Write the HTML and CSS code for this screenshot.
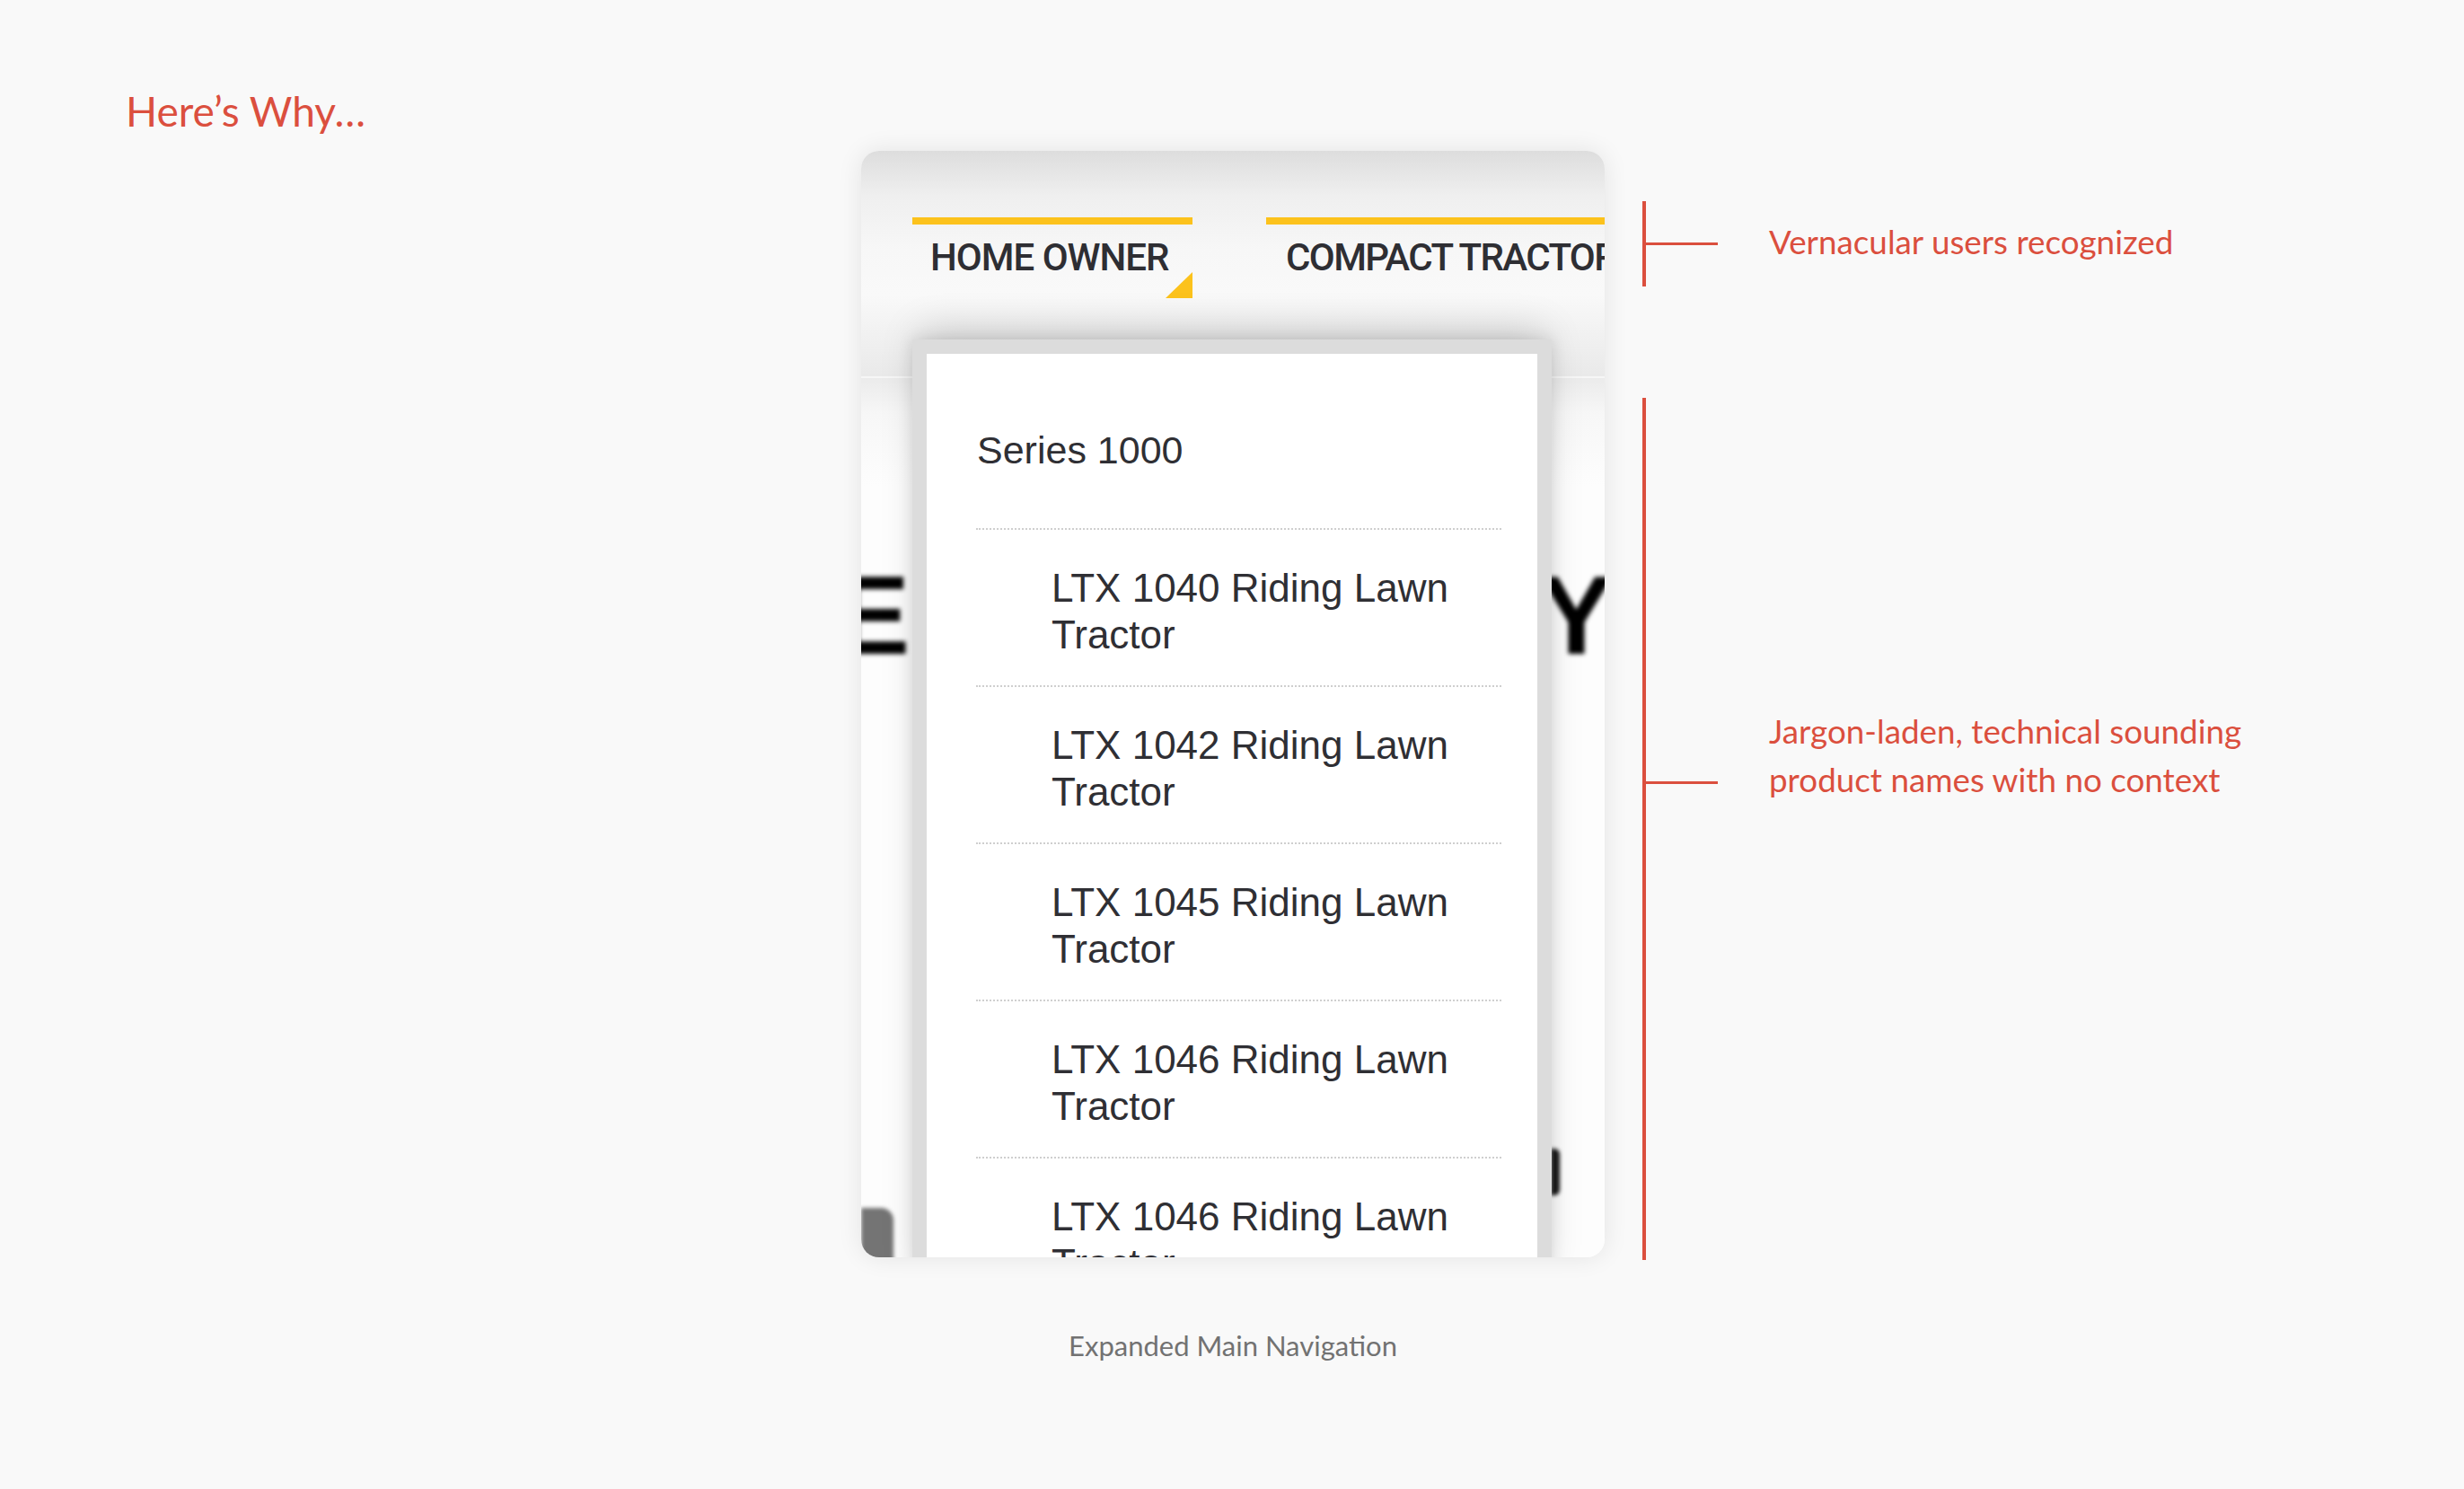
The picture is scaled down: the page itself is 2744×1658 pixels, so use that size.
FILE: index.html
```html
<!DOCTYPE html>
<html lang="en">
<head>
    <meta charset="UTF-8">
    <meta name="viewport" content="width=device-width, initial-scale=1.0">
    <title>Here's Why</title>
    <link rel="stylesheet" href="styles.css">
</head>
<body>

<div class="slide">
    <h1 class="title">Here’s Why…</h1>

    <div class="stage">
        <div class="device-col">
            <div class="phone">
                <div class="phone-nav">
                    <div class="tab tab-active">HOME OWNER</div>
                    <div class="tab">COMPACT TRACTORS</div>
                </div>

                <div class="phone-page">
                    <div class="hero"><span>E</span><span>Y</span></div>
                    <div class="page-bits">
                        <span class="bit-left"></span>
                        <span class="bit-right"></span>
                    </div>
                </div>

                <div class="dropdown">
                    <div class="series">Series 1000</div>
                    <ul class="models">
                        <li>LTX 1040 Riding Lawn Tractor</li>
                        <li>LTX 1042 Riding Lawn Tractor</li>
                        <li>LTX 1045 Riding Lawn Tractor</li>
                        <li>LTX 1046 Riding Lawn Tractor</li>
                        <li>LTX 1046 Riding Lawn Tractor</li>
                    </ul>
                </div>
            </div>
            <p class="caption">Expanded Main Navigation</p>
        </div>

        <div class="notes">
            <div class="note note-top">
                <span class="tick"></span>
                <p>Vernacular users recognized</p>
            </div>
            <div class="note note-long">
                <span class="tick"></span>
                <p>Jargon-laden, technical sounding<br>product names with no context</p>
            </div>
        </div>
    </div>
</div>

</body>
</html>
```

FILE: styles.css
```css
body {
    margin: 0;
    background: #f9f9f9;
    font-family: Lato, "Open Sans", sans-serif;
}
.slide {
    width: 2744px;
    height: 1658px;
    overflow: hidden;
}
.title {
    margin: 0;
    padding: 97px 0 0 140px;
    font-size: 46px;
    line-height: 54px;
    font-weight: 400;
    color: #db4f3e;
}
.stage {
    display: flex;
    margin-top: 17px;
    padding-left: 959px;
}
.device-col {
    width: 828px;
    display: flex;
    flex-direction: column;
}
.phone {
    position: relative;
    height: 1232px;
    border-radius: 20px;
    overflow: hidden;
    background: #fbfbfb;
    box-shadow: 0 0 28px rgba(0, 0, 0, 0.09);
}
.phone-nav {
    height: 253px;
    display: flex;
    gap: 82px;
    padding: 74px 0 0 57px;
    box-sizing: border-box;
    background: linear-gradient(#dddddd 0, #efefef 50px, #f7f7f7 110px, #f9f9f9 160px, #f1f1f1 205px, #e9e9e9 253px);
    border-bottom: 2px solid #f6f6f6;
}
.tab {
    position: relative;
    flex: none;
    width: 312px;
    height: 90px;
    box-sizing: border-box;
    border-top: 8px solid #fcc21c;
    padding: 12px 0 0 20px;
    font-family: Roboto, "Liberation Sans", sans-serif;
    font-size: 42px;
    line-height: 50px;
    font-weight: 500;
    letter-spacing: -1px;
    color: #2e2e33;
    white-space: nowrap;
}
.tab + .tab {
    width: 420px;
    padding-left: 22px;
    letter-spacing: -1.6px;
}
.tab-active::after {
    content: "";
    position: absolute;
    right: 0;
    top: 53px;
    border-left: 30px solid transparent;
    border-bottom: 29px solid #fcc21c;
}
.phone-page {
    padding-top: 201px;
    background: linear-gradient(#ebebeb 0, #f7f7f7 40px, #fdfdfd 120px);
}
.hero {
    display: flex;
    justify-content: space-between;
    margin: 0 -10px 0 -29px;
    font-family: "Liberation Sans", Arial, sans-serif;
    font-weight: 700;
    font-size: 125px;
    line-height: 125px;
    color: #000;
    filter: blur(2.5px);
}
.page-bits {
    display: flex;
    justify-content: space-between;
    align-items: flex-start;
    filter: blur(2px);
}
.bit-left {
    width: 36px;
    height: 60px;
    margin-top: 598px;
    background: #747474;
    border-top-right-radius: 14px;
}
.bit-right {
    width: 10px;
    height: 52px;
    margin: 532px 50px 0 0;
    background: #1a1a1a;
    border-radius: 0 6px 6px 0;
}
.dropdown {
    position: absolute;
    left: 57px;
    top: 210px;
    width: 712px;
    height: 1060px;
    box-sizing: border-box;
    border: 16px solid #dcdcdc;
    border-bottom: none;
    background: #fff;
    box-shadow: 0 -18px 40px -8px rgba(0, 0, 0, 0.17), 0 0 16px rgba(0, 0, 0, 0.1);
    font-family: "Liberation Sans", Arial, sans-serif;
    font-size: 43px;
    line-height: 52px;
    color: #2f2f34;
}
.series {
    padding: 81px 0 0 56px;
    margin-bottom: 61px;
}
.models {
    list-style: none;
    margin: 0 40px 0 55px;
    padding: 0;
    font-size: 44px;
}
.models li {
    border-top: 2px dotted #cfcfcf;
    padding: 39px 0 30px 84px;
}
.caption {
    margin: 80px 0 0;
    text-align: center;
    font-size: 31px;
    line-height: 36px;
    color: #727272;
}
.notes {
    display: flex;
    flex-direction: column;
    padding-left: 42px;
}
.note {
    display: flex;
    border-left: 4px solid #db4f3e;
}
.note p {
    margin: 0 0 0 57px;
    font-size: 36.8px;
    line-height: 54px;
    color: #db4f3e;
    white-space: nowrap;
}
.tick {
    flex: none;
    width: 80px;
    height: 3px;
    background: #db4f3e;
}
.note-top {
    margin-top: 56px;
    height: 95px;
    align-items: center;
}
.note-top p {
    margin-top: -5px;
}
.note-long {
    margin-top: 124px;
    height: 960px;
    align-items: flex-start;
}
.note-long .tick {
    margin-top: 427px;
}
.note-long p {
    margin-top: 344px;
}
```
